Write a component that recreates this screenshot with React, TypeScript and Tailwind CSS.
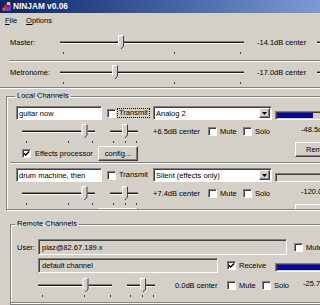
import React from "react";

const sunken =
  "border border-t-[#808080] border-l-[#808080] border-r-white border-b-white shadow-[inset_1px_1px_0_#404040]";
const raised =
  "border border-t-white border-l-white border-r-[#404040] border-b-[#404040] shadow-[inset_-1px_-1px_0_#808080]";

type TrackProps = { w: number; from: number; to: number; thumb?: number; ticks?: number[] };

function Trackbar({ w, from, to, thumb, ticks = [] }: TrackProps) {
  return (
    <svg width={w} height={21} className="block shrink-0">
      <rect x={from} y={7} width={to - from} height={1} fill="#808080" />
      <rect x={from} y={8} width={to - from} height={1} fill="#1a1a1a" />
      <rect x={from} y={9} width={to - from} height={1} fill="#ffffff" />
      {ticks.map((t) => (
        <rect key={t} x={t} y={18} width={1} height={2} fill="#404040" />
      ))}
      {thumb !== undefined && (
        <g>
          <path d={`M${thumb - 3} 1H${thumb + 3}V12L${thumb} 15.5L${thumb - 3} 12Z`} fill="#d4d0c8" />
          <path d={`M${thumb - 2.5} 12V1.5H${thumb + 2.5}`} stroke="#ffffff" fill="none" />
          <path d={`M${thumb + 2.5} 1.5V12L${thumb} 15`} stroke="#404040" fill="none" />
        </g>
      )}
    </svg>
  );
}

function Check({ on = false }: { on?: boolean }) {
  return (
    <span className={`flex h-[9px] w-[9px] shrink-0 items-center justify-center bg-white ${sunken}`}>
      {on && (
        <svg width="7" height="7" viewBox="0 0 7 7" className="block">
          <path d="M0.8 3.2L2.6 5L6.2 1.4" stroke="#000" strokeWidth="1.4" fill="none" />
        </svg>
      )}
    </span>
  );
}

function Etch({ className = "" }: { className?: string }) {
  return <div className={`h-[2px] shrink-0 border-t border-t-[#808080] border-b border-b-white ${className}`} />;
}

function Select({ value }: { value: string }) {
  return (
    <div className={`flex h-[14px] w-[119px] shrink-0 items-center bg-white ${sunken}`}>
      <span className="flex-1 overflow-hidden whitespace-nowrap pl-[2px]">{value}</span>
      <span className={`mr-[1px] flex h-[10px] w-[11px] items-center justify-center bg-[#d4d0c8] ${raised}`}>
        <svg width="5" height="3" className="block">
          <path d="M0 0H5L2.5 3Z" fill="#000" />
        </svg>
      </span>
    </div>
  );
}

function Button({ label, className }: { label: string; className: string }) {
  return (
    <div className={`flex shrink-0 items-center justify-center bg-[#d4d0c8] ${raised} ${className}`}>
      {label}
    </div>
  );
}

type ChannelProps = {
  name: string;
  focus?: boolean;
  source: string;
  db: string;
  level: string;
  peak: string;
};

function LocalChannel({ name, focus, source, db, level, peak }: ChannelProps) {
  return (
    <div className="flex">
      <div className="w-[268px] shrink-0">
        <div className="flex h-[14px] items-center">
          <div className={`ml-[9px] flex h-[14px] w-[86px] shrink-0 items-center bg-white pl-[2px] whitespace-nowrap ${sunken}`}>
            {name}
          </div>
          <span className="ml-[5px]">
            <Check />
          </span>
          <span
            className={`ml-[1px] w-[33px] shrink-0 border border-dotted px-[1px] leading-[8px] ${
              focus ? "border-black" : "border-transparent"
            }`}
          >
            Transmit
          </span>
          <div className="ml-[3px]">
            <Select value={source} />
          </div>
        </div>
        <div className="mt-[3px] flex h-[21px] items-start">
          <div className="ml-[13px]">
            <Trackbar w={78} from={2} to={75} thumb={64.5} ticks={[6, 48, 72]} />
          </div>
          <div className="ml-[10px]">
            <Trackbar w={32} from={2} to={30} thumb={17} ticks={[5, 17, 28]} />
          </div>
          <div className="ml-[13px] flex h-[17px] w-[55px] shrink-0 items-center whitespace-nowrap">{db}</div>
          <div className="flex h-[17px] items-center">
            <Check />
            <span className="ml-[3px] w-[23px] shrink-0">Mute</span>
            <Check />
            <span className="ml-[3px]">Solo</span>
          </div>
        </div>
        <div className="mt-[2px] flex h-[15px] items-center">
          <span className="ml-[15px]">
            <Check on />
          </span>
          <span className="ml-[4px] w-[63px] shrink-0 whitespace-nowrap">Effects processor</span>
          <Button label="config..." className="h-[15px] w-[40px]" />
        </div>
      </div>
      <div className="w-[80px] shrink-0">
        <div className={`mt-[5px] h-[9px] w-[60px] p-[1px] ${sunken}`}>
          <div className={`h-full bg-[#08089a] ${level}`} />
        </div>
        <div className="ml-[26px] mt-[5px] h-[9px] whitespace-nowrap leading-[9px]">{peak}</div>
        <Button label="Remove" className="ml-[20px] mt-[8px] h-[15px] w-[50px]" />
      </div>
    </div>
  );
}

export default function App() {
  return (
    <div className="h-[305px] w-[320px] overflow-hidden bg-[#d4d0c8] font-['Liberation_Sans',Arial,sans-serif] text-[7.5px] leading-[9px] text-black">
      <div className="flex h-[13px] items-center bg-linear-to-r from-[#0a246a] to-[#7c9bd6]">
        <svg width="9" height="9" viewBox="0 0 9 9" className="ml-[2px] block shrink-0">
          <path d="M0 9L4 3L6 5L9 0V9Z" fill="#7a3cb8" />
          <path d="M0 8L6 1" stroke="#e0202a" strokeWidth="1.6" />
          <rect x="5" y="0" width="3" height="3" fill="#f4d020" />
          <rect x="1" y="6" width="2" height="2" fill="#f06030" />
        </svg>
        <span className="ml-[2px] whitespace-nowrap text-[8.3px] font-bold leading-none text-white">NINJAM v0.06</span>
      </div>

      <div className="flex h-[15px] items-center gap-[9px] pl-[5px]">
        <span>
          <span className="underline">F</span>ile
        </span>
        <span>
          <span className="underline">O</span>ptions
        </span>
      </div>

      <div className="mt-[6px] flex h-[21px] items-start">
        <div className="flex h-[17px] w-[60px] shrink-0 items-center pl-[10px]">Master:</div>
        <Trackbar w={186} from={0} to={184} thumb={61} ticks={[3, 114, 180]} />
        <div className="ml-[11px] flex h-[17px] w-[58px] shrink-0 items-center whitespace-nowrap">-14.1dB center</div>
        <Trackbar w={30} from={2} to={30} />
      </div>

      <Etch className="ml-[9px] mt-[5px]" />

      <div className="mt-[2px] flex h-[21px] items-start">
        <div className="flex h-[17px] w-[60px] shrink-0 items-center pl-[10px]">Metronome:</div>
        <Trackbar w={186} from={0} to={184} thumb={55} ticks={[3, 114, 180]} />
        <div className="ml-[11px] flex h-[17px] w-[58px] shrink-0 items-center whitespace-nowrap">-17.0dB center</div>
        <Trackbar w={30} from={2} to={30} />
      </div>

      <Etch className="mt-[2px]" />

      <fieldset className="ml-[6px] mt-[2px] w-[340px] border border-[#808080] shadow-[inset_1px_1px_0_#fff,1px_1px_0_#fff]">
        <legend className="ml-[8px] px-[2px] leading-[10px]">Local Channels</legend>
        <div className="h-[108px] overflow-hidden pt-[5px]">
          <LocalChannel
            name="guitar now"
            focus
            source="Analog 2"
            db="+6.5dB center"
            level="w-[36px]"
            peak="-48.5dB"
          />
          <Etch className="ml-[3px] mt-[1px]" />
          <div className="mt-[4px]">
            <LocalChannel
              name="drum machine, then"
              source="Silent (effects only)"
              db="+7.4dB center"
              level="w-0"
              peak="-120.0dB"
            />
          </div>
        </div>
      </fieldset>

      <fieldset className="ml-[10px] mt-[9px] w-[340px] border border-[#808080] shadow-[inset_1px_1px_0_#fff,1px_1px_0_#fff]">
        <legend className="ml-[4px] px-[2px] leading-[10px]">Remote Channels</legend>
        <div className="mt-[10px] flex h-[16px] items-center">
          <span className="ml-[6px] w-[21px] shrink-0">User:</span>
          <div className={`flex h-[16px] w-[249px] shrink-0 items-center bg-[#d4d0c8] pl-[3px] ${sunken}`}>
            piaz@82.67.189.x
          </div>
          <span className="ml-[7px]">
            <Check />
          </span>
          <span className="ml-[3px]">Mute</span>
        </div>
        <div className="mt-[3px] flex h-[15px] items-start">
          <div className={`ml-[27px] flex h-[15px] w-[180px] shrink-0 items-center bg-[#d4d0c8] pl-[3px] ${sunken}`}>
            default channel
          </div>
          <div className="ml-[9px] flex h-[15px] items-center">
            <Check on />
            <span className="ml-[3px] w-[36px] shrink-0">Receive</span>
          </div>
          <div className={`mt-[5px] h-[9px] w-[60px] shrink-0 p-[1px] ${sunken}`}>
            <div className="h-full w-[52px] bg-[#08089a]" />
          </div>
        </div>
        <div className="mt-[4px] flex h-[21px] items-start">
          <div className="ml-[25px]">
            <Trackbar w={78} from={2} to={76} thumb={49.5} ticks={[6, 48, 74]} />
          </div>
          <div className="ml-[11px]">
            <Trackbar w={32} from={2} to={30} thumb={18} ticks={[5, 17, 28]} />
          </div>
          <div className="ml-[18px] flex h-[17px] w-[52px] shrink-0 items-center whitespace-nowrap">0.0dB center</div>
          <div className="flex h-[17px] items-center">
            <Check />
            <span className="ml-[3px] w-[23px] shrink-0">Mute</span>
            <Check />
            <span className="ml-[3px] w-[29px] shrink-0">Solo</span>
          </div>
          <div className="flex h-[13px] items-center whitespace-nowrap">-25.7dB</div>
        </div>
        <Etch className="mt-[4px]" />
      </fieldset>
    </div>
  );
}
